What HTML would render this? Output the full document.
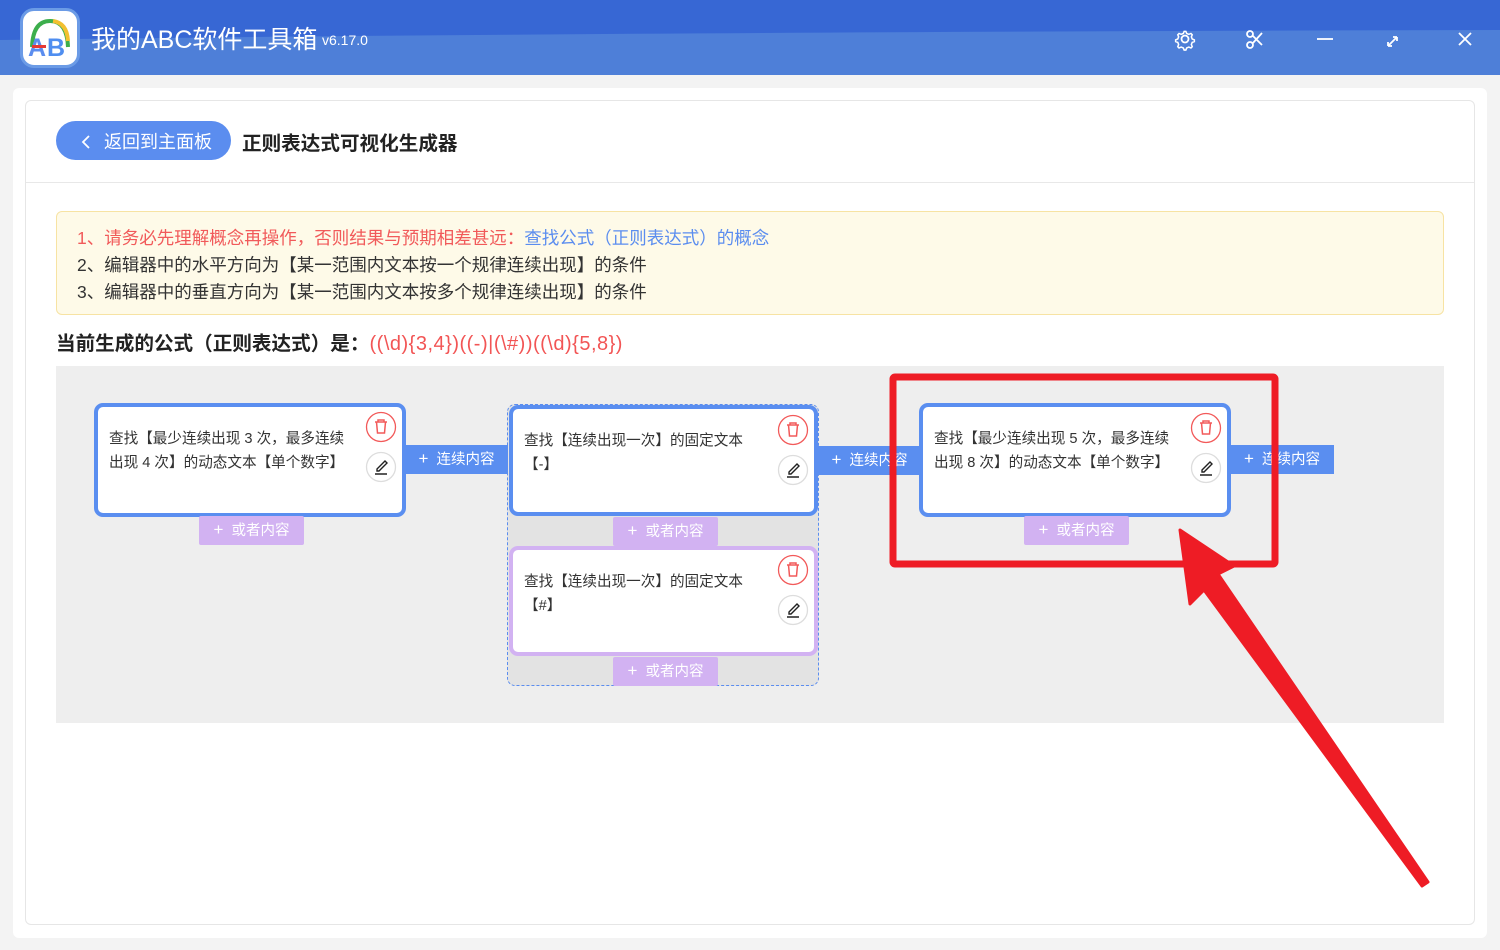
<!DOCTYPE html>
<html><head><meta charset="utf-8"><style>
*{margin:0;padding:0;box-sizing:border-box}
body{width:1500px;height:950px;overflow:hidden;background:#f3f3f3;font-family:"Liberation Sans","Noto Sans CJK SC",sans-serif;position:relative}
.abs{position:absolute}
.top{left:0;top:0;width:1500px;height:75px;background:#3767d4;overflow:hidden}
.card{border:4px solid #5a8ef0;border-radius:9px;background:#fff;font-size:14.6px;color:#333;line-height:24px;padding:20px 45px 0 11px}
.card.p{border-color:#d2b2f2}
.btn{color:#fff;font-size:14.5px;line-height:27px;text-align:center;white-space:nowrap}
.btn b{font-weight:normal;font-size:17px;margin-right:8px}
.blue{background:#5a8ef0}
.pur{background:#d2b2f2;border-radius:2px}
</style></head><body>
<div class="abs top">
<svg class="abs" style="left:0;top:0" width="1500" height="75"><path d="M0 40 Q600 32 1500 30 L1500 75 L0 75Z" fill="#4e7fd8"/></svg>
<div class="abs" style="left:20px;top:8px;width:60px;height:60px;border-radius:14px;background:#fff;border:3px solid #6b9be6"></div>
<svg class="abs" style="left:23px;top:11px" width="54" height="54"><path d="M9 36 Q10 10 27 10 Q44 10 45 36" fill="none" stroke="#3cae4c" stroke-width="4"/><path d="M30 10 Q44 12 45 30" fill="none" stroke="#f2c030" stroke-width="4"/><text x="5" y="45" font-family="Liberation Sans" font-weight="bold" font-size="25" fill="#5b8def">A</text><text x="24" y="45" font-family="Liberation Sans" font-weight="bold" font-size="25" fill="#4f8ef0">B</text><rect x="9" y="34" width="14" height="3" fill="#e53935"/></svg>
<div class="abs" style="left:91px;top:23px;color:#fff;font-size:25px;line-height:34px">我的ABC软件工具箱</div>
<div class="abs" style="left:322px;top:32px;color:#fff;font-size:14px">v6.17.0</div>
<svg class="abs" style="left:1170px;top:25px" width="310" height="28" fill="none" stroke="#fff" stroke-width="1.8">
<circle cx="15" cy="14" r="3.5"/><path d="M15 5 l2 0 l1 2.5 l2.5 1 l2.5-1 l1.5 1.5 l-1 2.5 l1 2.5 l2.5 1 v2 l-2.5 1 l-1 2.5 l1 2.5 l-1.5 1.5 l-2.5-1 l-2.5 1 l-1 2.5 h-2 l-1-2.5 l-2.5-1 l-2.5 1 l-1.5-1.5 l1-2.5 l-1-2.5 l-2.5-1 v-2 l2.5-1 l1-2.5 l-1-2.5 l1.5-1.5 l2.5 1 l2.5-1z" transform="translate(15 14) scale(0.85) translate(-16 -14)"/>
<circle cx="80" cy="9" r="3"/><circle cx="80" cy="20" r="3"/><path d="M82.5 10.5 L92 20 M82.5 18.5 L92 8"/>
<path d="M147 14 h16"/>
<path d="M218 21 l9-9 M218 21 v-4 M218 21 h4 M227 12 v4 M227 12 h-4"/>
<path d="M289 8 l12 12 M301 8 l-12 12"/>
</svg>
</div>
<div class="abs" style="left:13px;top:88px;width:1474px;height:850px;background:#fff;border-radius:6px"></div>
<div class="abs" style="left:25px;top:100px;width:1450px;height:825px;border:1px solid #e6e6e6;border-radius:6px"></div>
<div class="abs" style="left:26px;top:182px;width:1448px;height:1px;background:#e8e8e8"></div>
<div class="abs" style="left:56px;top:121px;width:175px;height:39px;background:#5b8def;border-radius:20px;color:#fff;font-size:18px;line-height:43px;padding-left:48px">返回到主面板</div>
<svg class="abs" style="left:80px;top:134px" width="12" height="16"><path d="M9 2 L3 8 L9 14" fill="none" stroke="#fff" stroke-width="1.8"/></svg>
<div class="abs" style="left:242px;top:127px;font-size:19.6px;font-weight:bold;color:#222">正则表达式可视化生成器</div>
<div class="abs" style="left:56px;top:211px;width:1388px;height:104px;background:#fefae8;border:1px solid #f7e3a3;border-radius:6px;font-size:17.5px;line-height:27px;padding:13px 0 0 20px;color:#333">
<div><span style="color:#f15a5a">1、请务必先理解概念再操作，否则结果与预期相差甚远：</span><span style="color:#5b8def">查找公式（正则表达式）的概念</span></div>
<div>2、编辑器中的水平方向为【某一范围内文本按一个规律连续出现】的条件</div>
<div>3、编辑器中的垂直方向为【某一范围内文本按多个规律连续出现】的条件</div>
</div>
<div class="abs" style="left:56px;top:327px;font-size:19.6px;font-weight:bold;color:#222;white-space:nowrap">当前生成的公式（正则表达式）是：<span style="color:#f25555;font-weight:normal;font-size:20px;letter-spacing:0.5px">((\d){3,4})((-)|(\#))((\d){5,8})</span></div>
<div class="abs" style="left:56px;top:366px;width:1388px;height:357px;background:#eeeeee"></div>

<div class="abs" style="left:507px;top:404px;width:312px;height:282px;border:1px dashed #5b8def;border-radius:8px;background:#e3e3e3"></div>

<div class="abs card" style="left:94px;top:403px;width:312px;height:114px">查找【最少连续出现 3 次，最多连续出现 4 次】的动态文本【单个数字】</div>
<div class="abs btn blue" style="left:405px;top:445px;width:103px"><b>+</b>连续内容</div>
<div class="abs btn pur" style="left:199px;top:516px;width:105px;height:29px"><b>+</b>或者内容</div>

<div class="abs card" style="left:509px;top:405px;width:309px;height:111px">查找【连续出现一次】的固定文本【-】</div>
<div class="abs btn blue" style="left:818px;top:446px;width:103px"><b>+</b>连续内容</div>
<div class="abs btn pur" style="left:613px;top:517px;width:105px;height:29px"><b>+</b>或者内容</div>
<div class="abs card p" style="left:509px;top:546px;width:309px;height:110px">查找【连续出现一次】的固定文本【#】</div>
<div class="abs btn pur" style="left:613px;top:657px;width:105px;height:29px"><b>+</b>或者内容</div>

<div class="abs card" style="left:919px;top:403px;width:312px;height:114px">查找【最少连续出现 5 次，最多连续出现 8 次】的动态文本【单个数字】</div>
<div class="abs btn blue" style="left:1230px;top:445px;width:104px"><b>+</b>连续内容</div>
<div class="abs btn pur" style="left:1024px;top:516px;width:105px;height:29px"><b>+</b>或者内容</div>

<svg class="abs" style="left:0;top:0" width="1500" height="950">
<defs><g id="ic">
<circle cx="0" cy="0" r="14.5" fill="#fff" stroke="#f25a5a" stroke-width="1.3"/>
<path d="M-6 -5 h12 M-3 -5 v-2 h6 v2 M-4.5 -5 l1 11 h7 l1 -11" fill="none" stroke="#f25a5a" stroke-width="1.5"/>
<circle cx="0" cy="40" r="14.5" fill="#fff" stroke="#ddd" stroke-width="1.3"/>
<path d="M-4 42 l8-8 l2 2 l-8 8 h-2z M-6 47 h12" fill="none" stroke="#222" stroke-width="1.4"/>
</g></defs>
<use href="#ic" x="381" y="427"/>
<use href="#ic" x="793" y="430"/>
<use href="#ic" x="793" y="570"/>
<use href="#ic" x="1206" y="428"/>
<rect x="893" y="377" width="382" height="187" fill="none" stroke="#ee1c25" stroke-width="7" rx="2"/>
<path d="M1180 530 L1234 566 L1218 574 L1428 882 L1422 886 L1204 590 L1190 604 Z" fill="#ee1c25" stroke="#ee1c25" stroke-width="3" stroke-linejoin="round"/>
</svg>
</body></html>
